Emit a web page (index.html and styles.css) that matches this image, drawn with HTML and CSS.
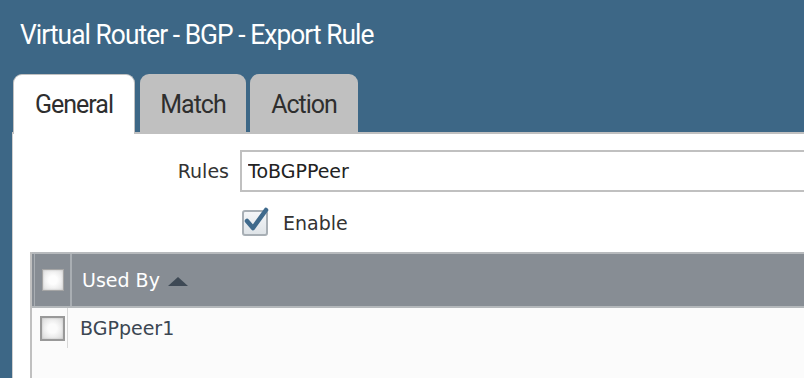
FILE: index.html
```html
<!DOCTYPE html>
<html lang="en">
<head>
  <meta charset="UTF-8">
  <title>Virtual Router - BGP - Export Rule</title>
  <link rel="stylesheet" href="styles.css">
</head>
<body>

  <!-- Dialog title -->
  <h1 class="title">Virtual Router - BGP - Export Rule</h1>

  <!-- Tab strip -->
  <div class="tabs">
    <div class="tab tab-active">General</div>
    <div class="tab tab-match">Match</div>
    <div class="tab tab-action">Action</div>
  </div>

  <!-- General tab content -->
  <section class="panel">
    <div class="field">
      <label class="field-label" for="rule-name">Rules</label>
      <input class="field-input" type="text" id="rule-name" value="ToBGPPeer">
    </div>

    <div class="field field-check">
      <span class="field-label"></span>
      <span class="check">
        <span class="check-box">
          <svg class="check-mark" width="30" height="30" viewBox="0 0 30 30">
            <path d="M6 14 L12 21 L25 3" fill="none" stroke="#3f6a8c" stroke-width="4.5" stroke-linecap="round" stroke-linejoin="round"/>
          </svg>
        </span>
        Enable
      </span>
    </div>

    <!-- Used By grid -->
    <div class="grid">
      <div class="grid-head">
        <div class="cell-select"><span class="box box-head"></span></div>
        <div class="cell-name">Used By <span class="sort-up"></span></div>
      </div>
      <div class="grid-row">
        <div class="cell-select"><span class="box"></span></div>
        <div class="cell-name">BGPpeer1</div>
      </div>
    </div>
  </section>

</body>
</html>
```

FILE: styles.css
```css
/* Page */
body {
  margin: 0;
  height: 378px;
  overflow: hidden;
  background-color: #3d6786;
  font-family: "DejaVu Sans", sans-serif;
  font-size: 19px;
  color: #333;
}

/* Title */
.title {
  margin: 0;
  height: 74px;
  box-sizing: border-box;
  padding: 19px 0 0 20px;
  font-family: Roboto, sans-serif;
  font-weight: 400;
  font-size: 28px;
  line-height: 32px;
  letter-spacing: -1px;
  color: #fff;
  transform: scaleX(0.94);
  transform-origin: 20px 0;
}

/* Tabs */
.tabs {
  display: flex;
  align-items: flex-start;
  height: 58px;
  padding-left: 13px;
}

.tab {
  box-sizing: border-box;
  height: 58px;
  padding-top: 16px;
  text-align: center;
  font-family: Roboto, sans-serif;
  font-size: 25px;
  line-height: 30px;
  letter-spacing: -1px;
  color: #2e2e2e;
  background-color: #c0c0c0;
  border-radius: 9px 9px 0 0;
}

.tab-active {
  position: relative;
  z-index: 1;
  width: 122px;
  height: 60px;
  padding-top: 15px;
  background-color: #fff;
  border: 1px solid #c0c0c0;
  border-bottom: none;
}

.tab-match {
  width: 106px;
  margin-left: 5px;
}

.tab-action {
  width: 108px;
  margin-left: 4px;
}

/* Panel */
.panel {
  margin-left: 12px;
  height: 250px;
  padding-top: 16px;
  box-sizing: border-box;
  background-color: #fff;
  border-top: 2px solid #c0c0c0;
  border-left: 1px solid #cfcfcf;
}

/* Form rows */
.field {
  display: flex;
  align-items: center;
}

.field-label {
  width: 216px;
  flex: none;
  text-align: right;
  color: #333;
}

.field-input {
  flex: 1;
  height: 42px;
  box-sizing: border-box;
  margin: 0 -20px 0 11px;
  padding: 0 6px;
  border: 2px solid #c0c0c0;
  font-family: "DejaVu Sans", sans-serif;
  font-size: 19px;
  color: #222;
  outline: none;
}

.field-check {
  margin-top: 18px;
}

.check {
  display: flex;
  align-items: center;
  margin-left: 13px;
  color: #333;
}

.check-box {
  position: relative;
  width: 26px;
  height: 26px;
  box-sizing: border-box;
  margin-right: 15px;
  border: 2px solid #a8afb5;
  border-radius: 3px;
  background: linear-gradient(#f4f6f8, #dfe4e8);
}

.check-mark {
  position: absolute;
  left: -3px;
  top: -5px;
}

/* Grid */
.grid {
  margin: 16px 0 0 17px;
  height: 140px;
  background-color: #fbfbfb;
  border-left: 2px solid #c0c0c0;
}

.grid-head {
  display: flex;
  align-items: stretch;
  height: 52px;
  background-color: #878d94;
  border-top: 2px solid #b7babd;
  border-bottom: 2px solid #b4b8bb;
  color: #fff;
}

.grid-head .cell-select {
  width: 38px;
  margin-left: 2px;
  border-left: 1px solid #a9aeb3;
  border-right: 2px solid #a9aeb3;
  padding-left: 7px;
}

.grid-head .cell-name {
  padding-left: 10px;
}

.cell-select {
  display: flex;
  align-items: center;
  box-sizing: border-box;
}

.cell-name {
  display: flex;
  align-items: center;
}

.sort-up {
  width: 0;
  height: 0;
  margin: 2px 0 0 8px;
  border-left: 10px solid transparent;
  border-right: 10px solid transparent;
  border-bottom: 9px solid #3e4955;
}

.grid-row {
  display: flex;
  height: 40px;
}

.grid-row .cell-select {
  width: 36px;
  padding-left: 8px;
  border-right: 1px solid #d8d8d8;
}

.grid-row .cell-name {
  padding-left: 12px;
  color: #3b4652;
}

/* Checkboxes in grid */
.box {
  display: block;
  width: 25px;
  height: 25px;
  box-sizing: border-box;
  border: 2px solid #999;
  background: radial-gradient(circle, #fbfbfb 30%, #d8d8d8 100%);
  box-shadow: inset 0 0 2px #bbb;
}

.box-head {
  width: 22px;
  height: 22px;
  border: 1px solid #a5a5a5;
  background: radial-gradient(circle, #fdfdfd 30%, #dedede 100%);
}
```
